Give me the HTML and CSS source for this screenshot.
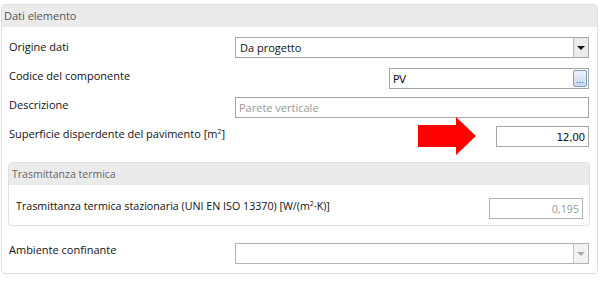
FILE: index.html
```html
<!DOCTYPE html>
<html lang="it">
    <head>
        <meta charset="UTF-8">
        <meta name="viewport" content="width=device-width, initial-scale=1.0">
        <title>Dati elemento</title>
        <link rel="stylesheet" href="styles.css">
    </head>
<body>
    <div class="panel">
        <div class="panel-head">Dati elemento</div>
        <div class="panel-body">
            <div class="rows">
                <div class="row row-first">
                    <span class="label">Origine dati</span>
                    <div class="combo">
                        <span class="combo-text">Da progetto</span>
                        <span class="combo-btn"><span class="caret"></span></span>
                    </div>
                </div>
                <div class="row">
                    <span class="label">Codice del componente</span>
                    <div class="field field-code">
                        <span class="field-text mono">PV</span>
                        <span class="dots">...</span>
                    </div>
                </div>
                <div class="row">
                    <span class="label">Descrizione</span>
                    <div class="field">
                        <span class="field-text placeholder">Parete verticale</span>
                    </div>
                </div>
                <div class="row">
                    <span class="label">Superficie disperdente del pavimento [m<sup>2</sup>]</span>
                    <div class="value-wrap">
                        <svg class="arrow" width="58" height="38" viewBox="0 0 58 38">
                            <polygon points="0,8 38,8 38,0 58,19 38,38 38,30 0,30" fill="#ff0000"/>
                        </svg>
                        <div class="field field-num">
                            <span class="field-text mono">12,00</span>
                        </div>
                    </div>
                </div>
            </div>

            <div class="subpanel">
                <div class="subpanel-head">Trasmittanza termica</div>
                <div class="subpanel-row">
                    <span class="label">Trasmittanza termica stazionaria (UNI EN ISO 13370) [W/(m<sup>2</sup>·K)]</span>
                    <div class="field field-num field-disabled">
                        <span class="field-text">0,195</span>
                    </div>
                </div>
            </div>

            <div class="row row-last">
                <span class="label">Ambiente confinante</span>
                <div class="combo combo-disabled">
                    <span class="combo-text"></span>
                    <span class="combo-btn"><span class="caret"></span></span>
                </div>
            </div>
        </div>
    </div>
</body>
</html>
```

FILE: styles.css
```css
body {
    margin: 0;
    background-color: #fff;
    font-family: 'Open Sans', 'Noto Sans', sans-serif;
    font-size: 11px;
    color: #111;
}

sup {
    font-size: 7px;
    line-height: 0;
    vertical-align: 4px;
}

.panel {
    margin: 4px 0 0 1px;
    width: 595px;
    height: 268px;
    border: 1px solid #dedede;
    border-radius: 4px;
}

.panel-head {
    height: 22px;
    line-height: 22px;
    padding-left: 2px;
    background-color: #ebebeb;
    color: #555;
    font-size: 11px;
}

.panel-body {
    padding: 0 7px 0 6px;
}

.rows {
    padding-top: 10px;
}

.row {
    display: grid;
    grid-template-columns: 226px 1fr;
    align-items: start;
    height: 29px;
    padding: 0 1px;
}

.row-first {
    height: 31px;
}

.label {
    white-space: nowrap;
    line-height: 21px;
}

.row .label {
    margin-top: -3px;
}

.row-first .label {
    margin-top: -1px;
}

.row-last .label {
    margin-top: -4px;
}

.combo,
.field {
    height: 19px;
    border: 1px solid #a6a6a6;
    display: flex;
    align-items: center;
    background-color: #fff;
}

.combo-text {
    flex: 1;
    padding-left: 4px;
    color: #111;
}

.combo-btn {
    width: 14px;
    height: 19px;
    border-left: 1px solid #b8b8b8;
    background-color: #ececec;
    display: grid;
    place-items: center;
}

.caret {
    width: 0;
    height: 0;
    border-left: 4px solid transparent;
    border-right: 4px solid transparent;
    border-top: 4px solid #111;
}

.combo-disabled {
    border-color: #b4b4b4;
}

.combo-disabled .combo-btn {
    background-color: #f2f2f2;
    border-left-color: #c4c4c4;
}

.combo-disabled .caret {
    border-top-color: #aaa;
}

.field-text {
    flex: 1;
    padding: 0 3px;
}

.mono {
    font-family: 'DejaVu Sans', sans-serif;
    font-size: 10.5px;
    letter-spacing: -0.3px;
}

.placeholder {
    color: #999;
}

.field-code {
    margin-left: 154px;
}

.dots {
    width: 12px;
    height: 15px;
    margin-right: 1px;
    border: 1px solid #7f9db9;
    border-radius: 2px;
    background: linear-gradient(#eef3fb, #c9d8ee);
    color: #1f3c78;
    font-size: 9px;
    line-height: 18px;
    text-align: center;
}

.value-wrap {
    display: flex;
    justify-content: flex-end;
    position: relative;
}

.arrow {
    position: absolute;
    left: 183px;
    top: -9px;
}

.field-num {
    width: 91px;
    text-align: right;
}

.subpanel {
    margin-top: 7px;
    height: 62px;
    border: 1px solid #e0e0e0;
    border-radius: 4px;
}

.subpanel-head {
    height: 22px;
    line-height: 22px;
    padding-left: 3px;
    background-color: #ebebeb;
    color: #666;
    font-size: 10.5px;
}

.subpanel-row {
    display: flex;
    align-items: flex-start;
    justify-content: space-between;
    padding: 13px 6px 0 7px;
    font-size: 10.7px;
}

.subpanel-row .label {
    margin-top: -2px;
}

.field-disabled {
    width: 92px;
    border-color: #b4b4b4;
    color: #999;
}

.row-last {
    margin-top: 17px;
    height: 21px;
}
```
